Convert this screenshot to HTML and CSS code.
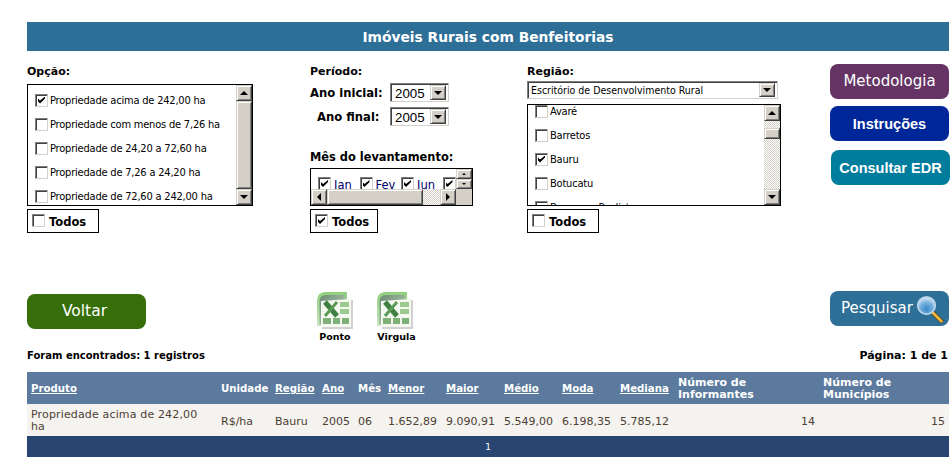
FILE: index.html
```html
<!DOCTYPE html>
<html lang="pt-BR">
<head>
<meta charset="utf-8">
<title>Imóveis Rurais com Benfeitorias</title>
<link rel="stylesheet" href="styles.css">
</head>
<body>
<main class="page">
  <h1 class="title">Imóveis Rurais com Benfeitorias</h1>

  <section class="cols">
    <div class="col">
      <div class="label">Opção:</div>
      <div class="listbox opt-box">
        <div class="items">
          <label class="item"><input type="checkbox" checked>Propriedade acima de 242,00 ha</label>
          <label class="item"><input type="checkbox">Propriedade com menos de 7,26 ha</label>
          <label class="item"><input type="checkbox">Propriedade de 24,20 a 72,60 ha</label>
          <label class="item"><input type="checkbox">Propriedade de 7,26 a 24,20 ha</label>
          <label class="item"><input type="checkbox">Propriedade de 72,60 a 242,00 ha</label>
        </div>
        <div class="sb">
          <div class="sbtn"><i class="arrow up"></i></div>
          <div class="thumb grow"></div>
          <div class="sbtn"><i class="arrow down"></i></div>
        </div>
      </div>
      <label class="todos"><input type="checkbox">Todos</label>
    </div>

    <div class="col">
      <div class="label">Período:</div>
      <div class="year-row first"><span class="year-label">Ano inicial:</span>
        <div class="combo year"><span class="combo-text">2005</span><div class="sbtn"><i class="arrow down"></i></div></div>
      </div>
      <div class="year-row"><span class="year-label indent">Ano final:</span>
        <div class="combo year"><span class="combo-text">2005</span><div class="sbtn"><i class="arrow down"></i></div></div>
      </div>
      <div class="label mes-label">Mês do levantamento:</div>
      <div class="mes">
        <div class="mes-items">
          <label class="mes-item"><input type="checkbox" checked>Jan</label>
          <label class="mes-item"><input type="checkbox" checked>Fev</label>
          <label class="mes-item"><input type="checkbox" checked>Jun</label>
          <label class="mes-item"><input type="checkbox" checked></label>
        </div>
        <div class="spin">
          <div class="sbtn small"><i class="arrow up tiny"></i></div>
          <div class="sbtn small"><i class="arrow down tiny"></i></div>
        </div>
        <div class="hbar">
          <div class="sbtn"><i class="arrow left"></i></div>
          <div class="thumb hthumb"></div>
          <div class="track grow"></div>
          <div class="sbtn"><i class="arrow right"></i></div>
        </div>
        <div class="corner"></div>
      </div>
      <label class="todos narrow"><input type="checkbox" checked>Todos</label>
    </div>

    <div class="col">
      <div class="label">Região:</div>
      <div class="combo region"><span class="combo-text small-text">Escritório de Desenvolvimento Rural</span><div class="sbtn"><i class="arrow down"></i></div></div>
      <div class="listbox reg-box">
        <div class="items scrolled">
          <label class="item"><input type="checkbox">Avaré</label>
          <label class="item"><input type="checkbox">Barretos</label>
          <label class="item"><input type="checkbox" checked>Bauru</label>
          <label class="item"><input type="checkbox">Botucatu</label>
          <label class="item"><input type="checkbox">Bragança Paulista</label>
        </div>
        <div class="sb">
          <div class="sbtn"><i class="arrow up"></i></div>
          <div class="track gap"></div>
          <div class="thumb reg-thumb"></div>
          <div class="track grow"></div>
          <div class="sbtn"><i class="arrow down"></i></div>
        </div>
      </div>
      <label class="todos"><input type="checkbox">Todos</label>
    </div>

    <div class="col side">
      <a class="btn metodologia">Metodologia</a>
      <a class="btn instrucoes">Instruções</a>
      <a class="btn consultar">Consultar EDR</a>
    </div>
  </section>

  <section class="actions">
    <a class="btn voltar">Voltar</a>
    <div class="exports">
      <a class="export">
        <svg class="xl" viewBox="0 0 38 40" width="38" height="40" aria-hidden="true">
          <defs>
            <linearGradient id="xlback" x1="0" y1="0" x2="1" y2="1"><stop offset="0" stop-color="#6a8a72"/><stop offset="1" stop-color="#c5d8c0"/></linearGradient>
            <linearGradient id="xlrim" x1="0" y1="0" x2="0" y2="1"><stop offset="0" stop-color="#8fd07c"/><stop offset="1" stop-color="#c9e6bf"/></linearGradient>
          </defs>
          <path d="M1 35V10Q1 1 10 1H31V35Z" fill="url(#xlrim)"/>
          <path d="M3.5 33V11Q3.5 4 10 4H29V33Z" fill="url(#xlback)"/>
          <path d="M6 11L37 9V38L6 38Z" fill="#bdbdbd" opacity=".7"/>
          <path d="M5 10L35 8V36H5Z" fill="#f4f8ee"/>
          <path d="M9 11L21 25" stroke="#3f7f42" stroke-width="5"/>
          <path d="M21 11L9 25" stroke="#5c9a58" stroke-width="3"/>
          <path d="M24 11h9v5h-9zM24 18h9v5h-9z" fill="#9cc98f"/>
          <path d="M7 27h8v6H7zM17 27h7v6h-7zM26 27h7v6h-7z" fill="#7fb077"/>
        </svg>
        <span>Ponto</span>
      </a>
      <a class="export">
        <svg class="xl" viewBox="0 0 38 40" width="38" height="40" aria-hidden="true">
          <path d="M1 35V10Q1 1 10 1H31V35Z" fill="url(#xlrim)"/>
          <path d="M3.5 33V11Q3.5 4 10 4H29V33Z" fill="url(#xlback)"/>
          <path d="M6 11L37 9V38L6 38Z" fill="#bdbdbd" opacity=".7"/>
          <path d="M5 10L35 8V36H5Z" fill="#f4f8ee"/>
          <path d="M9 11L21 25" stroke="#3f7f42" stroke-width="5"/>
          <path d="M21 11L9 25" stroke="#5c9a58" stroke-width="3"/>
          <path d="M24 11h9v5h-9zM24 18h9v5h-9z" fill="#9cc98f"/>
          <path d="M7 27h8v6H7zM17 27h7v6h-7zM26 27h7v6h-7z" fill="#7fb077"/>
        </svg>
        <span>Virgula</span>
      </a>
    </div>
    <a class="btn pesquisar">Pesquisar
      <svg class="lens" viewBox="0 0 32 32" width="28" height="28" aria-hidden="true">
        <defs>
          <radialGradient id="glass" cx=".5" cy=".7" r=".7"><stop offset="0" stop-color="#3a88c8"/><stop offset=".55" stop-color="#7ab2e0"/><stop offset="1" stop-color="#e6f1fa"/></radialGradient>
        </defs>
        <path d="M19 20L29 30" stroke="#5a4a20" stroke-width="5" stroke-linecap="round"/>
        <path d="M19 20L29 30" stroke="#f5b53a" stroke-width="3" stroke-linecap="round"/>
        <circle cx="12" cy="12" r="10" fill="url(#glass)" stroke="#b8d2e8" stroke-width="2"/>
      </svg>
    </a>
  </section>

  <div class="status"><span>Foram encontrados: 1 registros</span><span class="pager">Página: 1 de 1</span></div>

  <table class="grid">
    <colgroup>
      <col class="c-prod"><col class="c-uni"><col class="c-reg"><col class="c-ano"><col class="c-mes">
      <col class="c-val"><col class="c-val"><col class="c-val"><col class="c-val"><col class="c-val">
      <col class="c-inf"><col class="c-mun">
    </colgroup>
    <thead>
      <tr>
        <th><a>Produto</a></th><th>Unidade</th><th><a>Região</a></th><th><a>Ano</a></th><th>Mês</th>
        <th><a>Menor</a></th><th><a>Maior</a></th><th><a>Médio</a></th><th><a>Moda</a></th><th><a>Mediana</a></th>
        <th class="wide-head">Número de Informantes</th><th class="wide-head">Número de Municípios</th>
      </tr>
    </thead>
    <tbody>
      <tr>
        <td class="prod">Propriedade acima de 242,00 ha</td><td>R$/ha</td><td>Bauru</td><td>2005</td><td>06</td>
        <td>1.652,89</td><td>9.090,91</td><td>5.549,00</td><td>6.198,35</td><td>5.785,12</td>
        <td class="num">14</td><td class="num">15</td>
      </tr>
    </tbody>
    <tfoot>
      <tr><td colspan="12">1</td></tr>
    </tfoot>
  </table>
</main>
</body>
</html>
```

FILE: styles.css
```css
html, body { margin: 0; padding: 0; background: #fff; overflow: hidden; }
body { font-family: "DejaVu Sans", Verdana, sans-serif; font-size: 11px; color: #000; }
.page { width: 922px; margin-left: 27px; padding-top: 22px; }

.title {
  margin: 0; height: 29px; line-height: 30px; background: #2e6f98; color: #fff;
  font-size: 13.8px; font-weight: bold; text-align: center;
}

.cols { display: grid; grid-template-columns: 283px 217px 303px 119px; margin-top: 13px; }
.col { display: flex; flex-direction: column; align-items: flex-start; }
.label { font-weight: bold; line-height: 14px; font-size: 11px; height: 14px; padding-top: 1px; box-sizing: border-box; }
.year-label { font-weight: bold; line-height: 14px; font-size: 11.6px; }

input[type="checkbox"] {
  appearance: none; -webkit-appearance: none; margin: 0; flex: none; position: relative;
  width: 13px; height: 13px; background: #fff; box-sizing: border-box;
  border: 1px solid; border-color: #808080 #d4d0c8 #d4d0c8 #808080;
  box-shadow: inset 1px 1px 0 #404040, inset -1px -1px 0 #fff;
}
input[type="checkbox"]:checked::after {
  content: ""; position: absolute; left: 2px; top: 2px; width: 7px; height: 7px; background: #000;
  clip-path: polygon(0 29%, 0 72%, 29% 100%, 100% 29%, 100% 0, 29% 58%);
}

.listbox { display: flex; border: 1px solid #000; box-sizing: border-box; overflow: hidden; background: #fff; }
.opt-box { width: 226px; height: 122px; margin-top: 6px; }
.reg-box { width: 254px; height: 102px; margin-top: 5px; }
.items { flex: 1; min-width: 0; padding-top: 3px; overflow: hidden; }
.items.scrolled { padding-top: 0; margin-top: -6px; }
.item {
  display: flex; align-items: center; gap: 2px; height: 24px; padding-left: 7px; letter-spacing: -0.2px;
  font-family: "DejaVu Sans Condensed", "DejaVu Sans", sans-serif; font-size: 11px; white-space: nowrap;
}

.sb { width: 16px; flex: none; display: flex; flex-direction: column; background: #d4d0c8; }
.grow { flex: 1; }
.sbtn {
  width: 16px; height: 16px; flex: none; box-sizing: border-box; background: #d4d0c8;
  border: 1px solid; border-color: #d4d0c8 #404040 #404040 #d4d0c8;
  box-shadow: inset 1px 1px 0 #fff, inset -1px -1px 0 #808080;
  display: flex; align-items: center; justify-content: center;
}
.sbtn.small { height: 10px; }
.arrow { display: block; width: 0; height: 0; border: 4px solid transparent; }
.arrow.up { border-top: 0; border-bottom-color: #000; }
.arrow.down { border-bottom: 0; border-top-color: #000; }
.arrow.left { border-left: 0; border-right-color: #000; }
.arrow.right { border-right: 0; border-left-color: #000; }
.arrow.tiny { border-width: 2px; }
.arrow.tiny.up { border-top: 0; }
.arrow.tiny.down { border-bottom: 0; }
.thumb {
  box-sizing: border-box; background: #d4d0c8;
  border: 1px solid; border-color: #d4d0c8 #404040 #404040 #d4d0c8;
  box-shadow: inset 1px 1px 0 #fff, inset -1px -1px 0 #808080;
}
.reg-thumb { height: 11px; flex: none; }
.track { background: repeating-conic-gradient(#d4d0c8 0 25%, #fff 0 50%) 0 0 / 2px 2px; }
.track.gap { height: 7px; flex: none; }

.todos {
  display: flex; align-items: center; gap: 4px; height: 24px; margin-top: 3px; box-sizing: border-box;
  border: 1px solid #000; padding: 2px 12px 0 4px; font-weight: bold; font-size: 11.5px; background: #fff;
}
.todos input[type="checkbox"] { margin-top: -3px; }
.todos.narrow { padding-right: 8px; }

.year-row { display: flex; align-items: center; width: 139px; justify-content: space-between; margin-top: 5px; }
.year-row.first { margin-top: 5px; }
.indent { padding-left: 7px; }
.combo {
  display: flex; align-items: center; justify-content: space-between; box-sizing: border-box; background: #fff;
  border: 1px solid; border-color: #808080 #d4d0c8 #d4d0c8 #808080;
  box-shadow: inset 1px 1px 0 #404040; padding: 1px 2px 1px 1px;
}
.combo-text { font-family: "Liberation Sans", Arial, sans-serif; font-size: 13.3px; padding: 2px 0 0 3px; }
.combo-text.small-text { font-family: "DejaVu Sans Condensed", "DejaVu Sans", sans-serif; font-size: 10.5px; padding: 0 0 0 2px; }
.year { width: 59px; height: 19px; }
.year .sbtn { height: 15px; }
.region { width: 251px; height: 18px; margin-top: 3px; }
.region .sbtn { height: 14px; }

.mes-label { margin-top: 24px; padding-top: 0; font-size: 11.4px; }
.mes {
  margin-top: 4px; width: 163px; height: 38px; box-sizing: border-box; border: 1px solid #000;
  display: grid; grid-template-columns: 145px 16px; grid-template-rows: 20px 16px; background: #fff;
}
.mes-items { display: flex; overflow: hidden; padding: 8px 0 0 7px; box-sizing: border-box; }
.mes-item {
  display: flex; align-items: flex-start; gap: 3px; flex: none; width: 41.5px;
  color: #00006b; font-size: 11.5px; line-height: 16px;
}
.spin { display: flex; flex-direction: column; }
.hbar { display: flex; }
.hthumb { width: 96px; flex: none; }
.corner { background: #d4d0c8; }

.side { gap: 7px; }
.btn {
  display: flex; align-items: center; justify-content: center; width: 119px; height: 35px; border-radius: 8px;
  color: #fff; font-size: 15px; box-sizing: border-box; padding-bottom: 2px;
}
.metodologia { background: #653465; }
.instrucoes, .consultar { font-family: "Liberation Sans", Arial, sans-serif; font-weight: bold; font-size: 14.5px; padding-bottom: 0; }
.instrucoes { background: #00279a; }
.consultar { background: #007c9c; margin: 2px 0 0 1px; }

.actions { display: grid; grid-template-columns: 283px 520px 119px; margin-top: 58px; height: 57px; align-items: start; }
.voltar { background: #366e0a; margin-top: 3px; font-size: 15.5px; padding-right: 4px; }
.exports { display: flex; padding-left: 6px; gap: 22px; }
.export { display: flex; flex-direction: column; align-items: center; width: 38px; font-size: 9.5px; font-weight: bold; line-height: 12px; }
.export span { white-space: nowrap; }
.export:last-child span { padding-left: 3px; }
.xl { display: block; }
.pesquisar { background: #2e6f98; justify-content: flex-start; padding-left: 11px; overflow: hidden; white-space: nowrap; }
.lens { flex: none; margin: 2px 0 0 3px; }

.status { display: flex; justify-content: space-between; font-weight: bold; font-size: 10px; line-height: 14px; padding: 1px 1px 0 0; }
.pager { font-size: 11px; }

.grid { border-collapse: collapse; table-layout: fixed; width: 922px; margin-top: 9px; font-size: 11px; }
.c-prod { width: 190px; } .c-uni { width: 54px; } .c-reg { width: 47px; } .c-ano { width: 36px; } .c-mes { width: 30px; }
.c-val { width: 58px; } .c-inf { width: 145px; } .c-mun { width: 130px; }
.grid th, .grid td { padding: 0 4px; line-height: 12px; }
.grid thead tr { height: 32px; background: #5b7a9e; }
.grid th { color: #fff; text-align: left; font-weight: bold; font-size: 10.2px; padding-top: 2px; }
.grid th.wide-head { font-size: 11px; }
.grid th a { text-decoration: underline; }
.grid tbody tr { height: 32px; background: #f5f3f0; }
.grid tbody td { color: #4d4033; padding-top: 3px; }
.grid td.prod { letter-spacing: 0.15px; padding-top: 2px; padding-right: 14px; }
.grid td.num { text-align: right; }
.grid tfoot tr { height: 24px; background: #294672; }
.grid tfoot td { color: #fff; text-align: center; font-size: 9px; padding-bottom: 3px; }
```
